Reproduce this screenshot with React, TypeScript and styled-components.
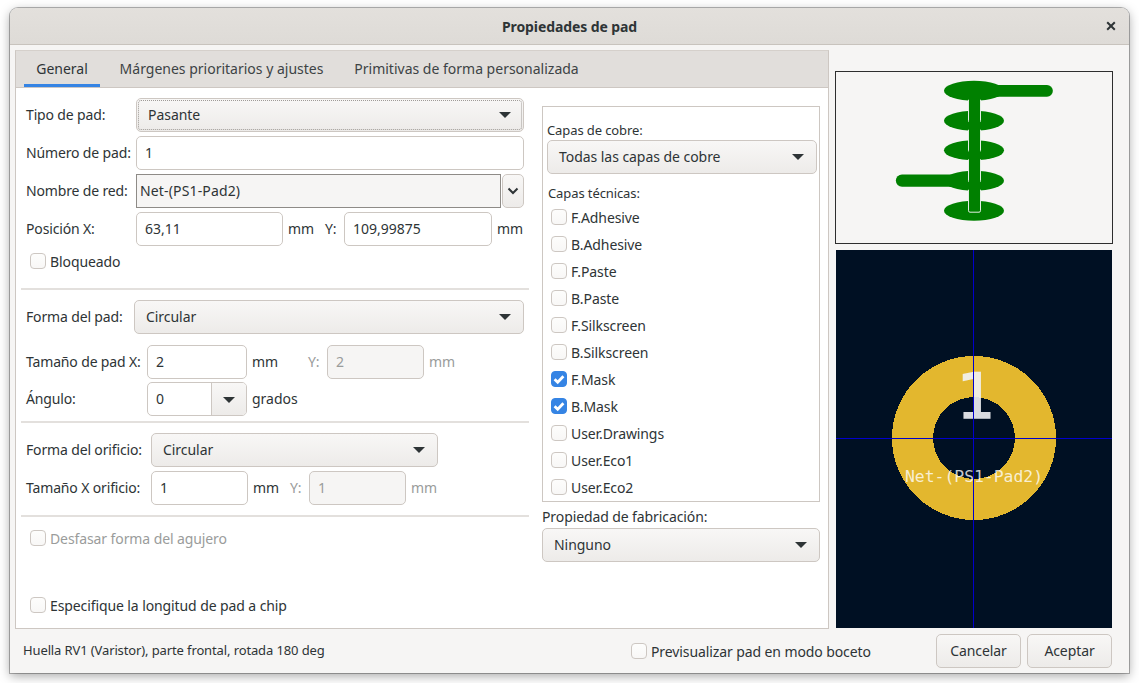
import React from 'react';
import styled, { createGlobalStyle } from 'styled-components';

const Global = createGlobalStyle`
  html, body { margin: 0; padding: 0; background: #fff; overflow: hidden; }
  body { font-family: "Noto Sans", "Open Sans", sans-serif; font-size: 14px; color: #2e3436; }
  * { box-sizing: border-box; }
`;

const Desktop = styled.div`
  width: 1139px;
  height: 683px;
  padding: 8px 10px;
`;
const Win = styled.div`
  width: 1119px;
  height: 665px;
  display: flex;
  flex-direction: column;
  background: #f6f5f4;
  border-radius: 8px 8px 0 0;
  box-shadow: 0 0 0 1px rgba(0, 0, 0, 0.28), 0 3px 11px rgba(0, 0, 0, 0.35);
  overflow: hidden;
`;
const TitleBar = styled.header`
  height: 37px;
  flex: none;
  position: relative;
  display: flex;
  align-items: center;
  justify-content: center;
  background: linear-gradient(#e3e0dc, #dedbd7);
  border-bottom: 1px solid #c8c3bd;
`;
const Title = styled.h1`
  margin: 0;
  font-size: 14px;
  font-weight: 700;
  color: #2e3436;
  letter-spacing: -0.1px;
`;
const CloseBtn = styled.span`
  position: absolute;
  right: 13px;
  top: 13px;
  width: 10px;
  height: 10px;
  display: block;
  line-height: 0;
`;
const Main = styled.div`
  flex: 1;
  display: flex;
  min-height: 0;
`;
const Notebook = styled.section`
  width: 814px;
  height: 579px;
  margin: 5px 0 0 5px;
  display: flex;
  flex-direction: column;
  background: #fff;
  border: 1px solid #cdc7c2;
  border-top-color: #d5d0cb;
  flex: none;
`;
const TabBar = styled.nav`
  height: 37px;
  flex: none;
  display: flex;
  gap: 8px;
  padding-left: 8px;
  background: #e1dedb;
  border-bottom: 1px solid #cdc7c2;
`;
const Tab = styled.div<{ $active?: boolean; $w: number }>`
  width: ${p => p.$w}px;
  height: 36px;
  display: flex;
  align-items: center;
  justify-content: center;
  white-space: nowrap;
  color: ${p => (p.$active ? '#2e3436' : '#3d4345')};
  border-bottom: 3px solid ${p => (p.$active ? '#3584e4' : 'transparent')};
  padding-top: 1px;
`;
const NotebookBody = styled.div`
  flex: 1;
  display: flex;
  min-height: 0;
`;
const LeftPane = styled.div`
  width: 526px;
  flex: none;
  display: flex;
  flex-direction: column;
  padding: 10px 0 0 5px;
`;
const RightPane = styled.div`
  width: 278px;
  flex: none;
  padding-top: 18px;
  display: flex;
  flex-direction: column;
`;
const Row = styled.div<{ $mt?: number }>`
  display: flex;
  align-items: center;
  height: 34px;
  flex: none;
  margin-top: ${p => p.$mt ?? 0}px;
  padding-left: 5px;
`;
const Label = styled.span<{ $w: number; $muted?: boolean }>`
  width: ${p => p.$w}px;
  flex: none;
  white-space: nowrap;
  letter-spacing: -0.15px;
  padding-bottom: 2px;
  color: ${p => (p.$muted ? '#9a9c9b' : '#2e3436')};
`;
const Unit = styled.span<{ $w: number; $muted?: boolean }>`
  width: ${p => p.$w}px;
  flex: none;
  padding-left: 5px;
  padding-bottom: 2px;
  color: ${p => (p.$muted ? '#9a9c9b' : '#2e3436')};
`;
const Input = styled.div<{ $w: number; $disabled?: boolean }>`
  width: ${p => p.$w}px;
  height: 34px;
  flex: none;
  display: flex;
  align-items: center;
  padding: 0 0 2px 8px;
  border: 1px solid #cdc7c2;
  border-radius: 5px;
  background: ${p => (p.$disabled ? '#f6f5f4' : '#fff')};
  color: ${p => (p.$disabled ? '#9a9c9b' : '#2e3436')};
`;
const Select = styled.div<{ $w: number; $focus?: boolean; $mt?: number }>`
  width: ${p => p.$w}px;
  height: 34px;
  flex: none;
  position: relative;
  display: flex;
  align-items: center;
  justify-content: space-between;
  padding: 0 12px 2px 11px;
  margin-top: ${p => p.$mt ?? 0}px;
  border: 1px solid #cdc7c2;
  border-radius: 5px;
  background: linear-gradient(#f8f7f6, #edebe9);
  letter-spacing: -0.05px;
  ${p =>
    p.$focus
      ? `&::after { content: ''; position: absolute; inset: 1px; border: 1px dotted #9f9b97; border-radius: 3px; }`
      : ''}
`;
const Arrow = styled.span`
  width: 0;
  height: 0;
  margin-top: 2px;
  border-left: 6px solid transparent;
  border-right: 6px solid transparent;
  border-top: 6px solid #2e3436;
`;
const NetField = styled.div`
  width: 365px;
  height: 34px;
  flex: none;
  display: flex;
  align-items: center;
  padding: 0 0 1px 3px;
  background: #f6f5f4;
  border: 1px solid #8e8b87;
  letter-spacing: 0.15px;
`;
const NetButton = styled.div`
  width: 22px;
  height: 34px;
  flex: none;
  margin-left: 1px;
  display: flex;
  align-items: center;
  justify-content: center;
  border: 1px solid #cdc7c2;
  border-radius: 5px;
  background: linear-gradient(#f8f7f6, #edebe9);
`;
const Spin = styled.div`
  width: 100px;
  height: 34px;
  flex: none;
  display: flex;
  border: 1px solid #cdc7c2;
  border-radius: 5px;
  overflow: hidden;
`;
const SpinValue = styled.div`
  flex: 1;
  display: flex;
  align-items: center;
  padding: 0 0 2px 8px;
`;
const SpinButton = styled.div`
  width: 35px;
  display: flex;
  align-items: center;
  justify-content: center;
  border-left: 1px solid #cdc7c2;
  background: linear-gradient(#f8f7f6, #edebe9);
`;
const Divider = styled.hr<{ $mt: number }>`
  width: 508px;
  height: 2px;
  border: 0;
  margin: ${p => p.$mt}px 0 0;
  flex: none;
  background: #e3e0dd;
`;
const CheckRow = styled.label<{ $mt?: number; $ml?: number; $disabled?: boolean }>`
  display: flex;
  align-items: center;
  height: 16px;
  gap: 4px;
  flex: none;
  margin-top: ${p => p.$mt ?? 0}px;
  margin-left: ${p => p.$ml ?? 0}px;
  letter-spacing: -0.1px;
  color: ${p => (p.$disabled ? '#9a9c9b' : '#2e3436')};
`;
const Box = styled.span<{ $on?: boolean }>`
  width: 16px;
  height: 16px;
  flex: none;
  display: flex;
  align-items: center;
  justify-content: center;
  border: 1px solid ${p => (p.$on ? '#3584e4' : '#cdc7c2')};
  border-radius: 4px;
  background: ${p => (p.$on ? '#3584e4' : 'linear-gradient(#fdfdfc, #f8f7f6)')};
`;
const LayersBox = styled.div`
  height: 396px;
  flex: none;
  border: 1px solid #cdc7c2;
  padding: 15px 2px 0 4px;
  display: flex;
  flex-direction: column;
`;
const SmallLabel = styled.div<{ $mt?: number; $ml?: number; $size?: number }>`
  margin-top: ${p => p.$mt ?? 0}px;
  margin-left: ${p => p.$ml ?? 0}px;
  font-size: ${p => p.$size ?? 13}px;
  line-height: 17px;
  letter-spacing: -0.1px;
  flex: none;
`;
const LayerList = styled.div`
  display: flex;
  flex-direction: column;
  gap: 11px;
  margin: 7px 0 0 4px;
`;
const Side = styled.aside`
  flex: 1;
  display: flex;
  flex-direction: column;
  padding: 26px 0 0 6px;
`;
const PadStack = styled.div`
  width: 278px;
  height: 173px;
  flex: none;
  border: 1px solid #2e2e2e;
  background: #f6f5f4;
`;
const Canvas = styled.div`
  width: 276px;
  height: 378px;
  flex: none;
  margin: 6px 0 0 1px;
  background: #001023;
`;
const Footer = styled.footer`
  height: 44px;
  flex: none;
  display: flex;
  align-items: center;
  padding: 0 17px 0 13px;
`;
const Status = styled.span`
  font-size: 13px;
  letter-spacing: -0.12px;
  width: 608px;
  flex: none;
  padding-bottom: 2px;
`;
const Buttons = styled.div`
  margin-left: auto;
  display: flex;
  gap: 6px;
`;
const Button = styled.button`
  width: 85px;
  height: 34px;
  font: inherit;
  letter-spacing: -0.1px;
  color: #2e3436;
  border: 1px solid #cdc7c2;
  border-radius: 5px;
  background: linear-gradient(#f8f7f6, #edebe9);
  padding: 0 0 2px;
`;

const Check = ({ on }: { on?: boolean }) => (
  <Box $on={on}>
    {on && (
      <svg width="14" height="14" viewBox="0 0 14 14">
        <path d="M2.6 7.2 L5.7 10.2 L11.4 4.2" fill="none" stroke="#fff" strokeWidth="2.8" />
      </svg>
    )}
  </Box>
);

const PadEllipses = [90.7, 120.7, 150.3, 180.7, 210.7];

const PadStackArt = () => (
  <svg width="276" height="171" viewBox="836 72 276 171" style={{ display: 'block' }}>
    <g fill="#008000">
      <path d="M985 85 H1047 a5.8 5.8 0 0 1 0 11.7 H985 Z" />
      <path d="M963 174.4 H902 a6 6 0 0 0 0 12.3 H963 Z" />
      {PadEllipses.map(cy => (
        <ellipse key={cy} cx="974" cy={cy} rx="30" ry="10" />
      ))}
    </g>
    {PadEllipses.slice(1).map((cy, i) => (
      <g key={cy}>
        <path
          d={`M968.5 ${PadEllipses[i] + 9} V${cy} Q968.5 ${cy + 1.5} 970 ${cy + 1.5} H979 Q980.5 ${cy + 1.5} 980.5 ${cy} V${PadEllipses[i] + 9}`}
          fill="#008000"
          stroke="#e3eee3"
          strokeWidth="1"
        />
        <rect x="969" y={PadEllipses[i]} width="11" height="11" fill="#008000" />
      </g>
    ))}
  </svg>
);

const CanvasArt = () => (
  <svg width="276" height="378" viewBox="836 250 276 378" style={{ display: 'block' }}>
    <g shapeRendering="crispEdges">
      <circle cx="974" cy="438" r="82" fill="#e3b72e" />
      <circle cx="974" cy="438" r="41" fill="#001023" />
    </g>
    <text
      x="975"
      y="418"
      textAnchor="middle"
      fontFamily="'DejaVu Sans Mono', monospace"
      fontSize="63"
      fill="#f2f3f6"
      stroke="#f2f3f6"
      strokeWidth="1.6"
      opacity="0.9"
    >
      1
    </text>
    <text
      x="974"
      y="482"
      textAnchor="middle"
      fontFamily="'DejaVu Sans Mono', monospace"
      fontSize="16.4"
      fill="#fff"
      fillOpacity="0.78"
    >
      Net-(PS1-Pad2)
    </text>
    <g shapeRendering="crispEdges" strokeWidth="1">
      <line x1="836" x2="1112" y1="438.5" y2="438.5" stroke="#0000cc" />
      <line x1="973.5" x2="973.5" y1="250" y2="628" stroke="#0000cc" />
    </g>
  </svg>
);

const layers: [string, boolean][] = [
  ['F.Adhesive', false],
  ['B.Adhesive', false],
  ['F.Paste', false],
  ['B.Paste', false],
  ['F.Silkscreen', false],
  ['B.Silkscreen', false],
  ['F.Mask', true],
  ['B.Mask', true],
  ['User.Drawings', false],
  ['User.Eco1', false],
  ['User.Eco2', false],
];

export default function App() {
  return (
    <Desktop>
      <Global />
      <Win>
        <TitleBar>
          <Title>Propiedades de pad</Title>
          <CloseBtn>
            <svg width="10" height="10" viewBox="0 0 10 10">
              <path d="M1.2 1.2 L8.8 8.8 M8.8 1.2 L1.2 8.8" stroke="#2e3436" strokeWidth="2" fill="none" />
            </svg>
          </CloseBtn>
        </TitleBar>
        <Main>
          <Notebook>
            <TabBar>
              <Tab $active $w={76}>General</Tab>
              <Tab $w={227}>Márgenes prioritarios y ajustes</Tab>
              <Tab $w={247}>Primitivas de forma personalizada</Tab>
            </TabBar>
            <NotebookBody>
              <LeftPane>
                <Row>
                  <Label $w={110}>Tipo de pad:</Label>
                  <Select $w={388} $focus>
                    Pasante
                    <Arrow />
                  </Select>
                </Row>
                <Row $mt={4}>
                  <Label $w={110}>Número de pad:</Label>
                  <Input $w={388}>1</Input>
                </Row>
                <Row $mt={4}>
                  <Label $w={110}>Nombre de red:</Label>
                  <NetField>Net-(PS1-Pad2)</NetField>
                  <NetButton>
                    <svg width="12" height="8" viewBox="0 0 12 8">
                      <path d="M1.5 1.5 L6 6 L10.5 1.5" fill="none" stroke="#2e3436" strokeWidth="2" />
                    </svg>
                  </NetButton>
                </Row>
                <Row $mt={4}>
                  <Label $w={110}>Posición X:</Label>
                  <Input $w={147}>63,11</Input>
                  <Unit $w={42}>mm</Unit>
                  <Label $w={19}>Y:</Label>
                  <Input $w={148}>109,99875</Input>
                  <Unit $w={32}>mm</Unit>
                </Row>
                <CheckRow $mt={7} $ml={9}>
                  <Check />
                  Bloqueado
                </CheckRow>
                <Divider $mt={19} />
                <Row $mt={10}>
                  <Label $w={108}>Forma del pad:</Label>
                  <Select $w={390}>
                    Circular
                    <Arrow />
                  </Select>
                </Row>
                <Row $mt={11}>
                  <Label $w={121}>Tamaño de pad X:</Label>
                  <Input $w={100}>2</Input>
                  <Unit $w={61}>mm</Unit>
                  <Label $w={19} $muted>Y:</Label>
                  <Input $w={97} $disabled>2</Input>
                  <Unit $w={34} $muted>mm</Unit>
                </Row>
                <Row $mt={3}>
                  <Label $w={121}>Ángulo:</Label>
                  <Spin>
                    <SpinValue>0</SpinValue>
                    <SpinButton>
                      <Arrow />
                    </SpinButton>
                  </Spin>
                  <Unit $w={60}>grados</Unit>
                </Row>
                <Divider $mt={5} />
                <Row $mt={10}>
                  <Label $w={125}>Forma del orificio:</Label>
                  <Select $w={287}>
                    Circular
                    <Arrow />
                  </Select>
                </Row>
                <Row $mt={4}>
                  <Label $w={125}>Tamaño X orificio:</Label>
                  <Input $w={97}>1</Input>
                  <Unit $w={42}>mm</Unit>
                  <Label $w={19} $muted>Y:</Label>
                  <Input $w={97} $disabled>1</Input>
                  <Unit $w={34} $muted>mm</Unit>
                </Row>
                <Divider $mt={10} />
                <CheckRow $mt={13} $ml={9} $disabled>
                  <Check />
                  Desfasar forma del agujero
                </CheckRow>
                <CheckRow $mt={51} $ml={9}>
                  <Check />
                  Especifique la longitud de pad a chip
                </CheckRow>
              </LeftPane>
              <RightPane>
                <LayersBox>
                  <SmallLabel>Capas de cobre:</SmallLabel>
                  <Select $w={270} $mt={1}>
                    Todas las capas de cobre
                    <Arrow />
                  </Select>
                  <SmallLabel $mt={11} $ml={1}>Capas técnicas:</SmallLabel>
                  <LayerList>
                    {layers.map(([name, on]) => (
                      <CheckRow key={name}>
                        <Check on={on} />
                        {name}
                      </CheckRow>
                    ))}
                  </LayerList>
                </LayersBox>
                <SmallLabel $mt={6} $size={14}>Propiedad de fabricación:</SmallLabel>
                <Select $w={278} $mt={3}>
                  Ninguno
                  <Arrow />
                </Select>
              </RightPane>
            </NotebookBody>
          </Notebook>
          <Side>
            <PadStack>
              <PadStackArt />
            </PadStack>
            <Canvas>
              <CanvasArt />
            </Canvas>
          </Side>
        </Main>
        <Footer>
          <Status>Huella RV1 (Varistor), parte frontal, rotada 180 deg</Status>
          <CheckRow>
            <Check />
            Previsualizar pad en modo boceto
          </CheckRow>
          <Buttons>
            <Button>Cancelar</Button>
            <Button>Aceptar</Button>
          </Buttons>
        </Footer>
      </Win>
    </Desktop>
  );
}
